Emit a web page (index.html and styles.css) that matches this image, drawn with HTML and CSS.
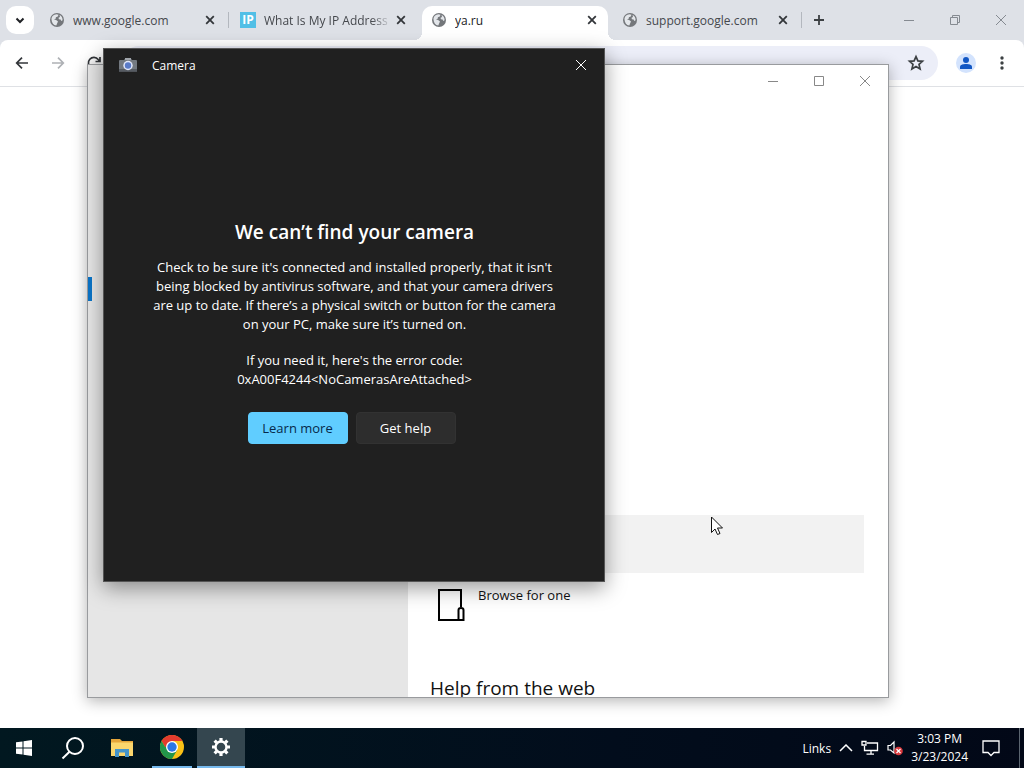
FILE: index.html
```html
<!DOCTYPE html>
<html lang="en">
<head>
<meta charset="utf-8">
<title>Desktop</title>
<link rel="stylesheet" href="styles.css">
</head>
<body>
<svg class="defs" width="0" height="0" aria-hidden="true">
  <symbol id="globe" viewBox="0 0 16 16"><circle cx="8" cy="8" r="7" fill="#74777b"/><path d="M2.500 7.500C2.400 4.600 4.700 2.500 7.500 2.300L9.500 2.800 8.800 4.500 6.900 5.200 6.700 6.700 5 7.200 7.500 8.200 9 9.600 8.300 11 7.300 13.600C4.500 13.300 2.700 10.900 2.500 7.500ZM10.500 3.100C12.500 4 13.700 6 13.600 8.300L12.300 8.900 11.600 7.500 9.900 7.200 9.500 5.700 11 4.900Z" fill="#e3e6ea"/></symbol>
  <symbol id="tabx" viewBox="0 0 10 10"><path d="M1.200 1.200 8.800 8.800M8.800 1.200 1.200 8.800" stroke="currentColor" stroke-width="1.800" fill="none"/></symbol>
  <symbol id="winx" viewBox="0 0 12 12"><path d="M1 1 11 11M11 1 1 11" stroke="currentColor" fill="none"/></symbol>
  <symbol id="min" viewBox="0 0 12 12"><path d="M1 6.500H11" stroke="currentColor" fill="none"/></symbol>
</svg>
<div class="desktop">
  <div class="screen">
    <section class="browser" aria-label="Browser">
      <div class="tabstrip">
        <button class="tab-search" aria-label="Search tabs"><svg width="12" height="12" viewBox="0 0 12 12"><path d="M2.500 4.500 6 8 9.500 4.500" fill="none" stroke="#1f2125" stroke-width="2"/></svg></button>
        <div class="tabs">
          <div class="tab"><svg class="fav"><use href="#globe"/></svg><span class="tab-title">www.google.com</span><button class="tab-close" aria-label="Close tab"><svg width="10" height="10"><use href="#tabx"/></svg></button></div>
          <div class="tab sep"><span class="fav ip">IP</span><span class="tab-title fade">What Is My IP Address</span><button class="tab-close" aria-label="Close tab"><svg width="10" height="10"><use href="#tabx"/></svg></button></div>
          <div class="tab active"><svg class="fav"><use href="#globe"/></svg><span class="tab-title">ya.ru</span><button class="tab-close" aria-label="Close tab"><svg width="10" height="10"><use href="#tabx"/></svg></button></div>
          <div class="tab"><svg class="fav"><use href="#globe"/></svg><span class="tab-title">support.google.com</span><button class="tab-close" aria-label="Close tab"><svg width="10" height="10"><use href="#tabx"/></svg></button></div>
          <button class="new-tab sep" aria-label="New tab"><svg width="12" height="12" viewBox="0 0 12 12"><path d="M6 1V11M1 6H11" stroke="#3c4043" stroke-width="1.800"/></svg></button>
        </div>
        <div class="controls">
          <button aria-label="Minimize"><svg width="12" height="12"><use href="#min"/></svg></button>
          <button aria-label="Restore"><svg width="12" height="12" viewBox="0 0 12 12" fill="none" stroke="currentColor"><path d="M1.500 3.500H8.500V10.500H1.500ZM3.500 3.500V1.500H10.500V8.500H8.500"/></svg></button>
          <button aria-label="Close"><svg width="12" height="12"><use href="#winx"/></svg></button>
        </div>
      </div>
      <div class="toolbar">
        <button aria-label="Back"><svg width="16" height="16" viewBox="0 0 16 16" fill="none" stroke="#33363a" stroke-width="1.700"><path d="M14 8H3M8 2.700 2.700 8 8 13.300"/></svg></button>
        <button aria-label="Forward"><svg width="16" height="16" viewBox="0 0 16 16" fill="none" stroke="#aeb1b5" stroke-width="1.700"><path d="M2 8H13M8 2.700 13.300 8 8 13.300"/></svg></button>
        <button aria-label="Reload"><svg width="16" height="16" viewBox="0 0 16 16" fill="none" stroke="#33363a" stroke-width="1.700"><path d="M13 10A5.500 5.500 0 1 1 12.200 4.500L13.500 6M14 2V6.500H9.500"/></svg></button>
        <div class="omnibox"><button aria-label="Bookmark this tab"><svg width="18" height="18" viewBox="0 0 18 18"><path d="M9 2.600 10.900 6.900 15.500 7.300 12 10.400 13.100 15 9 12.500 4.900 15 6 10.400 2.500 7.300 7.100 6.900Z" fill="none" stroke="#3c4043" stroke-width="1.700"/></svg></button></div>
        <button class="profile" aria-label="Profile"><svg width="20" height="20" viewBox="0 0 20 20"><circle cx="10" cy="10" r="10" fill="#d3e3fd"/><circle cx="10" cy="7" r="3" fill="#1257c4"/><path d="M4 16V14C4 11.700 7 11 10 11S16 11.700 16 14V16Z" fill="#1257c4"/></svg></button>
        <button class="menu" aria-label="Menu"><svg width="4" height="16" viewBox="0 0 4 16" fill="#3c4043"><circle cx="2" cy="3" r="1.700"/><circle cx="2" cy="8" r="1.700"/><circle cx="2" cy="13" r="1.700"/></svg></button>
      </div>
    </section>

    <section class="window settings" aria-label="Settings">
      <div class="settings-nav"><div class="nav-marker"></div></div>
      <div class="settings-main">
        <div class="controls">
          <button aria-label="Minimize"><svg width="12" height="12"><use href="#min"/></svg></button>
          <button aria-label="Maximize"><svg width="12" height="12" viewBox="0 0 12 12"><path d="M1.500 1.500H10.500V10.500H1.500Z" fill="none" stroke="currentColor"/></svg></button>
          <button aria-label="Close"><svg width="12" height="12"><use href="#winx"/></svg></button>
        </div>
        <div class="settings-body">
          <div class="hover-row"></div>
          <button class="browse"><svg width="28" height="34" viewBox="0 0 28 34" fill="none" stroke="#000" stroke-width="2"><path d="M24 19V2H2V32H22"/><path d="M21.500 32V22Q21.500 20 24 20T26.500 22V32Z"/></svg><span>Browse for one</span></button>
          <h2>Help from the web</h2>
        </div>
      </div>
    </section>

    <section class="window camera" aria-label="Camera">
      <div class="camera-bar">
        <svg width="18" height="16" viewBox="0 0 18 16"><path d="M1 3H5L6.500 1H11.500L13 3H17Q18 3 18 4V14.500H0V4Q0 3 1 3Z" fill="#737980"/><path d="M6 1H12V3H6Z" fill="#a0a5ab"/><path d="M0 12H18V14.500H0Z" fill="#565b62"/><circle cx="9" cy="8.500" r="4.700" fill="#e1e7fa"/><circle cx="9" cy="8.500" r="3.200" fill="#5a7bc8"/></svg>
        <span>Camera</span>
        <button aria-label="Close"><svg width="12" height="12"><use href="#winx"/></svg></button>
      </div>
      <div class="camera-body">
        <h1>We can’t find your camera</h1>
        <p>Check to be sure it's connected and installed properly, that it isn't<br>being blocked by antivirus software, and that your camera drivers<br>are up to date. If there’s a physical switch or button for the camera<br>on your PC, make sure it’s turned on.</p>
        <p>If you need it, here's the error code:<br>0xA00F4244&lt;NoCamerasAreAttached&gt;</p>
        <div class="actions"><button class="primary">Learn more</button><button>Get help</button></div>
      </div>
    </section>

    <svg class="cursor" width="13" height="20" viewBox="0 0 13 20"><path d="M.5 1V16.500L4 13 6.500 18.500 9 17.500 6.500 12H11.500Z" fill="#fff" stroke="#111"/></svg>
  </div>

  <footer class="taskbar">
    <button aria-label="Start"><svg width="16" height="16" viewBox="0 0 16 16" fill="#fff"><path d="M0 2.300 6.500 1.400V7.500H0ZM7.500 1.300 16 0V7.500H7.500ZM0 8.500H6.500V14.600L0 13.700ZM7.500 8.500H16V16L7.500 14.800Z"/></svg></button>
    <button aria-label="Search"><svg width="24" height="24" viewBox="0 0 24 24" fill="none" stroke="#fff" stroke-width="2"><circle cx="14" cy="10" r="8"/><path d="M8.500 15.800 1.500 22.500"/></svg></button>
    <button aria-label="File Explorer"><svg width="22" height="20" viewBox="0 0 22 20"><path d="M0 1H9L11 3H22V18H0Z" fill="#e5a53a"/><path d="M0 4.500H22V18H0Z" fill="#fbd66d"/><path d="M4 11H18V19H14V14.500H8V19H4Z" fill="#4594c9"/></svg></button>
    <button class="running" aria-label="Chrome"><svg width="24" height="24" viewBox="0 0 24 24"><circle cx="12" cy="12" r="12" fill="#fbc116"/><path d="M12 12V6H22.400A12 12 0 0 0 1.600 6L6.800 15Z" fill="#e33b2e"/><path d="M1.600 6A12 12 0 0 0 12 24L17.200 15 12 12H5.100Z" fill="#23964a"/><circle cx="12" cy="12" r="6" fill="#fff"/><circle cx="12" cy="12" r="4.700" fill="#2b77e4"/></svg></button>
    <button class="running current" aria-label="Settings"><svg width="20" height="20" viewBox="0 0 20 20" fill="none" stroke="#fff"><circle cx="10" cy="10" r="5.500" stroke-width="2.400"/><g stroke-width="3.200"><path d="M10 1V4M10 16V19M1 10H4M16 10H19M3.600 3.600 5.700 5.700M14.300 14.300 16.400 16.400M3.600 16.400 5.700 14.300M14.300 5.700 16.400 3.600"/></g></svg></button>
    <div class="tray">
      <span>Links</span>
      <svg width="14" height="8" viewBox="0 0 14 8" fill="none" stroke="#fff" stroke-width="1.500"><path d="M1 7 7 1 13 7"/></svg>
      <svg width="18" height="16" viewBox="0 0 18 16" fill="none" stroke="#fff" stroke-width="1.300"><path d="M6 3H16.500V10.500H3.500V6M10 10.500V14M5.500 14.200H13M1 1.500H5V5H1Z"/></svg>
      <svg width="16" height="16" viewBox="0 0 16 16"><path d="M1 5.500H3.500L7 2V13L3.500 10H1Z" fill="none" stroke="#fff" stroke-width="1.200"/><circle cx="11.500" cy="11" r="4.300" fill="#d9383c"/><path d="M9.500 9 13.500 13M13.500 9 9.500 13" stroke="#fff" stroke-width="1.200"/></svg>
      <div class="clock"><span>3:03 PM</span><span>3/23/2024</span></div>
      <svg class="note" width="18" height="18" viewBox="0 0 18 18" fill="none" stroke="#fff" stroke-width="1.300"><path d="M1 2H17V13.500H12L9 16.500 6 13.500H1Z"/></svg>
      <i class="show-desktop"></i>
    </div>
  </footer>
</div>
</body>
</html>
```
FILE: styles.css
```css
* { box-sizing: border-box; }
body { margin: 0; font: 13px/19px "Open Sans", "Noto Sans", sans-serif; color: #111; }
button { border: 0; padding: 0; background: none; font: inherit; color: inherit; display: flex; align-items: center; justify-content: center; }
svg { display: block; flex: none; }
h1, h2, p { margin: 0; }
.defs { position: absolute; }
.desktop { min-height: 100vh; display: flex; flex-direction: column; overflow: hidden; }
.screen { position: relative; flex: 1; background: #fff; }

.browser { background: #dee1e7; }
.tabstrip { display: flex; height: 40px; padding-left: 6px; }
.tab-search { width: 28px; height: 28px; margin: 6px 6px 0 0; border-radius: 10px; background: #fff; }
.tabs { display: flex; flex: 1; gap: 5px; padding-top: 6px; min-width: 0; }
.tab { position: relative; flex: 0 1 186px; min-width: 0; display: flex; align-items: center; padding: 0 11px 6px 9px; color: #45484d; font-size: 12px; }
.fav { width: 16px; height: 16px; margin-right: 8px; flex: none; }
.ip { background: #51bfe6; color: #fff; font-weight: 700; line-height: 16px; text-align: center; }
.tab-title { flex: 1; min-width: 0; overflow: hidden; white-space: nowrap; }
.fade { -webkit-mask-image: linear-gradient(90deg, #000 84%, transparent); mask-image: linear-gradient(90deg, #000 84%, transparent); }
.tab-close { width: 10px; height: 10px; margin-left: 4px; color: #33363a; }
.active { background: #fff; border-radius: 10px 10px 0 0; color: #202124; }
.active::before, .active::after { content: ""; position: absolute; bottom: 0; width: 8px; height: 8px; }
.active::before { left: -8px; background: radial-gradient(circle at 0 0, transparent 8px, #fff 8px); }
.active::after { right: -8px; background: radial-gradient(circle at 100% 0, transparent 8px, #fff 8px); }
.sep::before { content: ""; position: absolute; left: -3px; top: 6px; width: 1px; height: 16px; background: #b3b7be; }
.new-tab { position: relative; width: 30px; height: 28px; }
.controls { display: flex; justify-content: flex-end; color: #888; }
.controls button { width: 46px; }
.tabstrip .controls { color: #858a91; }
.toolbar { display: flex; align-items: center; height: 47px; padding: 0 14px; background: #fff; border-bottom: 1px solid #dfe1e5; border-radius: 8px 8px 0 0; }
.toolbar > button { margin-right: 20px; }
.toolbar > .profile { margin: 0 24px 0 18px; }
.toolbar > .menu { width: 4px; margin-right: 6px; }
.omnibox { flex: 1; height: 34px; border-radius: 17px; background: #eceef8; display: flex; justify-content: flex-end; padding-right: 13px; }

.window { position: absolute; }
.settings { left: 87px; top: 64px; width: 802px; height: 634px; display: flex; background: #fff; border: 1px solid #999b9e; box-shadow: 0 3px 14px rgba(0, 0, 0, .3); overflow: hidden; }
.settings-nav { width: 320px; background: #e6e6e6; padding-top: 212px; }
.nav-marker { width: 4px; height: 24px; background: #0a74c8; }
.settings-main { flex: 1; }
.settings-main .controls button { height: 32px; }
.settings-body { padding: 418px 24px 0 22px; }
.hover-row { height: 58px; background: #f2f2f2; }
.browse { align-items: flex-start; gap: 13px; margin: 15px 0 0 7px; line-height: 16px; }
.browse span { margin-top: -1px; }
.settings-body h2 { margin-top: 52px; font-size: 19px; line-height: 28px; font-weight: 400; white-space: nowrap; }

.camera { left: 103px; top: 48px; width: 502px; height: 534px; display: flex; flex-direction: column; background: #202020; border: 1px solid #555; color: #fff; box-shadow: 0 6px 20px rgba(0, 0, 0, .4); }
.camera-bar { display: flex; align-items: center; height: 32px; padding-left: 15px; gap: 15px; font-size: 12px; }
.camera-bar button { width: 46px; height: 32px; margin-left: auto; }
.camera-body { flex: 1; display: flex; flex-direction: column; align-items: center; justify-content: center; text-align: center; padding-left: 1px; }
.camera-body h1 { font-size: 19px; line-height: 28px; font-weight: 600; margin-bottom: 12px; }
.camera-body p { margin-bottom: 17px; white-space: nowrap; }
.actions { display: flex; gap: 8px; margin: 6px 6px 0 0; }
.actions button { width: 100px; height: 32px; border-radius: 4px; background: #2d2d2d; border: 1px solid #323232; }
.actions .primary { background: #60cdff; border-color: #60cdff; color: #06294a; }
.cursor { position: absolute; left: 711px; top: 516px; }

.taskbar { display: flex; height: 40px; background: linear-gradient(90deg, #011820, #020d1c 60%, #020817); color: #fff; }
.taskbar > button { width: 48px; margin-right: 1px; }
.taskbar > .running { border-bottom: 2px solid #76b9ed; width: 40px; margin: 0 5px 0 5px; }
.taskbar > .current { width: 48px; margin: 0; background: #34464f; }
.tray { margin-left: auto; display: flex; align-items: center; gap: 8px; font-size: 12px; }
.clock { display: flex; flex-direction: column; text-align: center; line-height: 18px; }
.note { margin-left: 6px; }
.show-desktop { align-self: stretch; width: 5px; border-left: 1px solid #5b6570; margin-left: 11px; }
```
